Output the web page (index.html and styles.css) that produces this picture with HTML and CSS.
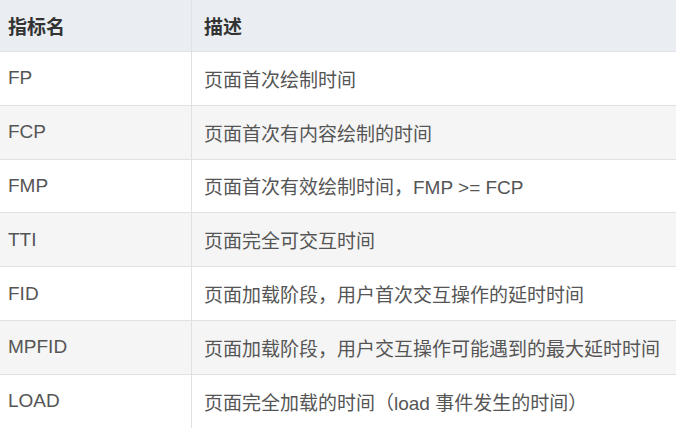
FILE: index.html
```html
<!DOCTYPE html>
<html lang="zh-CN">
<head>
<meta charset="utf-8">
<link rel="stylesheet" href="styles.css">
</head>
<body>
<table class="metrics">
  <thead>
    <tr><th class="col-name">指标名</th><th>描述</th></tr>
  </thead>
  <tbody>
    <tr><td>FP</td><td>页面首次绘制时间</td></tr>
    <tr><td>FCP</td><td>页面首次有内容绘制的时间</td></tr>
    <tr><td>FMP</td><td>页面首次有效绘制时间，FMP &gt;= FCP</td></tr>
    <tr><td>TTI</td><td>页面完全可交互时间</td></tr>
    <tr><td>FID</td><td>页面加载阶段，用户首次交互操作的延时时间</td></tr>
    <tr><td>MPFID</td><td>页面加载阶段，用户交互操作可能遇到的最大延时时间</td></tr>
    <tr><td>LOAD</td><td>页面完全加载的时间（load 事件发生的时间）</td></tr>
  </tbody>
</table>
</body>
</html>
```

FILE: styles.css
```css
html, body {
  margin: 0;
  padding: 0;
  background: #ffffff;
  overflow: hidden;
}

.metrics {
  border-collapse: collapse;
  margin: -1px 0 0 -5px;
  width: 684px;
  table-layout: fixed;
  font-family: "Liberation Sans", "Noto Sans CJK SC", sans-serif;
  font-size: 19px;
  color: #555555;
}

.metrics th,
.metrics td {
  border: 1px solid #dfe2e5;
  padding: 0 12px;
  text-align: left;
  vertical-align: middle;
  white-space: nowrap;
}

.metrics .col-name {
  width: 171px;
}

.metrics thead th {
  height: 51px;
  background: #eaeef2;
  color: #333333;
  font-weight: bold;
}

.metrics tbody td {
  height: 52.8px;
}

.metrics tbody tr:nth-child(even) td {
  background: #f5f5f5;
}
```
